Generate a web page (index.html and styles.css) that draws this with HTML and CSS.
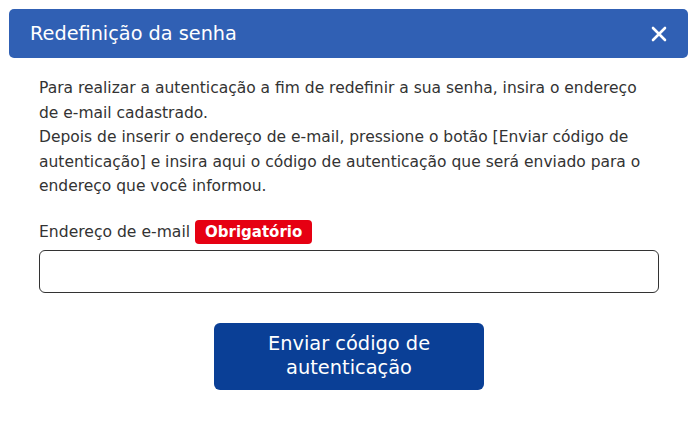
FILE: index.html
```html
<!DOCTYPE html>
<html lang="pt">
<head>
<meta charset="utf-8">
<link rel="stylesheet" href="styles.css">
</head>
<body>
<div class="dialog">
  <div class="header">
    <h1 class="title">Redefinição da senha</h1>
    <button class="close" aria-label="Fechar">
      <svg width="16" height="16" viewBox="0 0 16 16"><path d="M2 2L14 14M14 2L2 14" stroke="#fff" stroke-width="2.6" stroke-linecap="round"/></svg>
    </button>
  </div>
  <div class="body">
    <p class="desc">Para realizar a autenticação a fim de redefinir a sua senha, insira o endereço de e-mail cadastrado.<br>Depois de inserir o endereço de e-mail, pressione o botão [Enviar código de autenticação] e insira aqui o código de autenticação que será enviado para o endereço que você informou.</p>
    <div class="field">
      <label class="label">Endereço de e-mail <span class="badge">Obrigatório</span></label>
      <input class="input" type="email">
    </div>
    <div class="actions">
      <button class="submit">Enviar código de autenticação</button>
    </div>
  </div>
</div>
</body>
</html>
```
FILE: styles.css
```css
html, body {
  margin: 0;
  padding: 0;
  background: #fff;
}
body {
  font-family: "DejaVu Sans", Verdana, sans-serif;
  color: #333;
}
.dialog {
  padding: 9px 9px 0 9px;
}
.header {
  height: 49px;
  background: #3060b4;
  border-radius: 5px;
  display: flex;
  align-items: center;
  justify-content: space-between;
  padding: 0 21px 0 21px;
}
.title {
  margin: 0;
  font-size: 19.3px;
  font-weight: normal;
  color: #fff;
}
.close {
  background: none;
  border: 0;
  padding: 0;
  width: 16px;
  height: 16px;
  display: flex;
  cursor: pointer;
}
.body {
  padding: 18px 29px 0 30px;
}
.desc {
  margin: 0;
  font-size: 15.5px;
  line-height: 24.5px;
}
.field {
  margin-top: 21px;
}
.label {
  display: flex;
  align-items: center;
  gap: 5px;
  font-size: 15.6px;
  height: 24px;
}
.badge {
  background: #e60012;
  color: #fff;
  font-weight: bold;
  font-size: 15px;
  border-radius: 4px;
  padding: 0 10px;
  height: 24px;
  line-height: 24px;
}
.input {
  display: block;
  box-sizing: border-box;
  width: 100%;
  height: 43px;
  margin-top: 6px;
  border: 1px solid #333;
  border-radius: 6px;
  font-size: 15px;
  padding: 0 10px;
  background: #fff;
}
.actions {
  display: flex;
  justify-content: center;
  margin-top: 30px;
}
.submit {
  width: 270px;
  height: 67px;
  background: #0a3f96;
  color: #fff;
  border: 0;
  border-radius: 6px;
  font-family: "DejaVu Sans", Verdana, sans-serif;
  font-size: 19.4px;
  line-height: 24px;
  padding: 0 30px;
}
```
